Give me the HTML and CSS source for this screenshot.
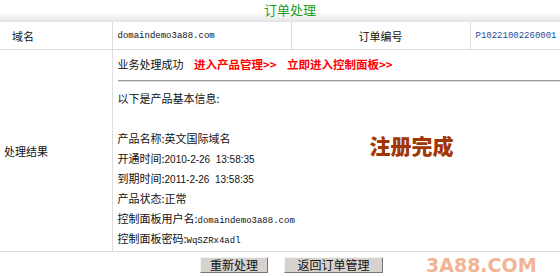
FILE: index.html
```html
<!DOCTYPE html>
<html lang="zh-CN">

<head>
    <meta charset="UTF-8">
    <title>订单处理</title>
    <link rel="stylesheet" href="styles.css">
</head>

<body>
    <div class="title">订单处理</div>

    <table class="order">
        <colgroup>
            <col class="c1">
            <col class="c2">
            <col class="c3">
            <col class="c4">
        </colgroup>
        <tr class="head-row">
            <td class="name-label">域名</td>
            <td class="mono">domaindemo3a88.com</td>
            <td class="center">订单编号</td>
            <td class="mono blue">P10221002260001</td>
        </tr>
        <tr>
            <td class="result-label">处理结果</td>
            <td colspan="3" class="result">
                <div class="line">
                    业务处理成功
                    <a href="#" class="go">进入产品管理&gt;&gt;</a>
                    <a href="#" class="go">立即进入控制面板&gt;&gt;</a>
                </div>
                <div class="rule"></div>
                <div class="line">以下是产品基本信息:</div>
                <div class="line">&nbsp;</div>
                <div class="info">
                    <div class="info-lines">
                        <div class="line">产品名称:英文国际域名</div>
                        <div class="line">开通时间:<span class="num">2010-2-26&nbsp; 13:58:35</span></div>
                        <div class="line">到期时间:<span class="num">2011-2-26&nbsp; 13:58:35</span></div>
                        <div class="line">产品状态:正常</div>
                        <div class="line">控制面板用户名:<span class="mono">domaindemo3a88.com</span></div>
                        <div class="line">控制面板密码:<span class="mono">WqSZRx4adl</span></div>
                    </div>
                    <div class="stamp">注册完成</div>
                </div>
            </td>
        </tr>
    </table>

    <div class="actions">
        <button type="button">重新处理</button>
        <button type="button" class="wide">返回订单管理</button>
        <span class="watermark">3A88.COM</span>
    </div>
</body>

</html>
```

FILE: styles.css
```css
body {
    margin: 0;
    font-family: "Noto Sans CJK SC", sans-serif;
    font-size: 11px;
    color: #111111;
    background-color: #ffffff;
}

.title {
    height: 22px;
    line-height: 20px;
    text-align: center;
    padding-left: 20px;
    font-size: 13px;
    color: #1c9a1c;
    background: linear-gradient(#ffffff 55%, #e4e4e4);
}

.order {
    width: 560px;
    table-layout: fixed;
    border-collapse: collapse;
}

.c1 { width: 112px; }
.c2 { width: 179px; }
.c3 { width: 179px; }
.c4 { width: 90px; }

.order td {
    border: 1px solid #dddddd;
    padding: 0 5px;
    white-space: nowrap;
    overflow: hidden;
}

.order tr:first-child td {
    border-top: none;
}

.order td:first-child {
    border-left: none;
}

.head-row td {
    height: 27px;
}

.name-label {
    padding-left: 12px !important;
}

.result-label {
    padding-left: 4px !important;
    vertical-align: middle;
}

.center {
    text-align: center;
}

.mono {
    font-family: "Liberation Mono", monospace;
    font-size: 9px;
}

.blue {
    color: #1c4c9c;
}

.num {
    font-family: "Liberation Sans", sans-serif;
    font-size: 10px;
}

.result {
    padding: 4px 0 3px 5px !important;
    vertical-align: top;
}

.line {
    height: 20px;
    line-height: 20px;
}

.go {
    margin-left: 8px;
    color: #ff0000;
    font-weight: bold;
    font-size: 11.5px;
    text-decoration: none;
}

.rule {
    margin: 6px 0;
    border-top: 1px solid #999999;
    border-bottom: 1px solid #dddddd;
}

.info {
    display: flex;
}

.info-lines {
    width: 252px;
}

.stamp {
    margin-top: 7px;
    height: 20px;
    line-height: 20px;
    font-size: 21px;
    font-weight: 900;
    color: #a23604;
}

.actions {
    position: relative;
    display: flex;
    gap: 16px;
    padding-left: 200px;
    margin-top: 5px;
}

button {
    height: 16px;
    width: 68px;
    padding: 0;
    font-family: "Noto Sans CJK SC", sans-serif;
    font-size: 12px;
    line-height: 14px;
    color: #111111;
    background-color: #d6d3ce;
    border: 1px solid;
    border-color: #f4f4f4 #777777 #777777 #f4f4f4;
    cursor: pointer;
}

button.wide {
    width: 99px;
}

.watermark {
    position: absolute;
    left: 426px;
    top: -3px;
    font-family: "DejaVu Sans", sans-serif;
    font-size: 19px;
    font-weight: bold;
    color: #f3b495;
}
```
